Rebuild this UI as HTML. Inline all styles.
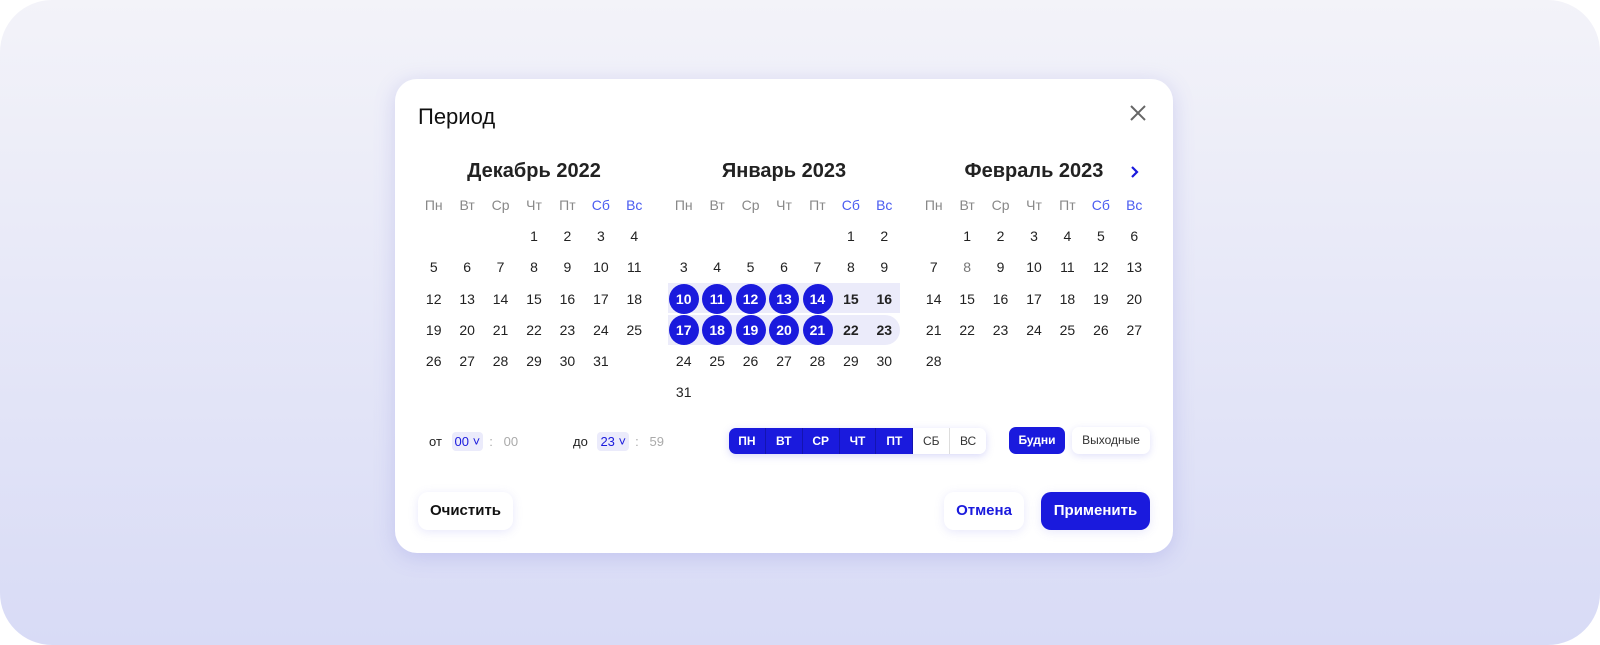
<!DOCTYPE html>
<html><head><meta charset="utf-8"><style>
*{margin:0;padding:0;box-sizing:border-box}
body{width:1600px;height:645px;background:#fff;font-family:"Liberation Sans","DejaVu Sans",sans-serif;position:relative;overflow:hidden}
.bg{position:absolute;left:0;top:0;width:1600px;height:645px;border-radius:52px;background:linear-gradient(#f3f3f9,#d8dbf6)}
.card{position:absolute;left:395px;top:79px;width:778px;height:474px;background:#fff;border-radius:22px;box-shadow:0 4px 20px rgba(120,120,220,.25)}
.t{position:absolute;left:418px;top:104px;font-size:22px;color:#111}
.x{position:absolute;left:1128px;top:103px}
.mt{position:absolute;top:160px;width:234px;text-align:center;font-size:20px;font-weight:bold;color:#222}
.grid{position:absolute;top:190px;width:234px;display:grid;grid-template-columns:repeat(7,1fr);grid-auto-rows:31.2px;font-size:14px;color:#222;text-align:center}
.grid span{line-height:31px;position:relative;z-index:2}
.grid .h{color:#888;line-height:30px}
.grid .w{color:#4a5cf0}
.grid .s span,.grid span.s{}
.sel{color:#fff;font-weight:bold}
.sel::before{content:"";position:absolute;left:2px;top:0;width:30px;height:30px;border-radius:15px;background:#1a1add;z-index:-1}
.b{font-weight:bold}
.band{position:absolute;left:668px;width:232px;height:30px;background:#ebebfa;z-index:1}
.tm{position:absolute;top:432px;font-size:13px;color:#222}
.sp{display:inline-block;background:#ebebfb;color:#1a1add;border-radius:4px;padding:2px 3px;margin:0 6px}
.gr{color:#aaa}
.seg{position:absolute;left:729px;top:428px;width:257px;height:26px;border-radius:7px;background:#fff;box-shadow:0 2px 8px rgba(100,100,230,.25);display:flex;overflow:hidden;font-size:12px;font-weight:bold}
.seg div{flex:1;text-align:center;line-height:26px;color:#fff;background:#1a1add;border-right:1px solid #1414b0}
.seg div.o{background:#fff;color:#333;font-weight:normal;border-right:1px solid #ddd}
.pill{position:absolute;top:427px;height:27px;line-height:27px;border-radius:7px;font-size:12px;text-align:center}
.btn{position:absolute;top:492px;height:38px;line-height:38px;border-radius:10px;font-size:15px;font-weight:bold;text-align:center;box-shadow:0 2px 10px rgba(100,100,230,.15)}
</style></head><body>
<div class="bg"></div>
<div class="card"></div>
<div class="t">Период</div>
<svg class="x" width="20" height="20" viewBox="0 0 20 20"><path d="M3 3L17 17M17 3L3 17" stroke="#666" stroke-width="2"/></svg>
<div class="mt" style="left:417px">Декабрь 2022</div>
<div class="mt" style="left:667px">Январь 2023</div>
<div class="mt" style="left:917px">Февраль 2023</div>
<svg style="position:absolute;left:1129px;top:165px" width="12" height="14" viewBox="0 0 12 14"><path d="M3 2L8 7L3 12" fill="none" stroke="#1a1add" stroke-width="2.2"/></svg>
<div class="band" style="top:283px"></div>
<div class="band" style="top:315px;border-radius:0 15px 15px 0"></div>
<div class="grid" style="left:417px">
<span class="h">Пн</span><span class="h">Вт</span><span class="h">Ср</span><span class="h">Чт</span><span class="h">Пт</span><span class="h w">Сб</span><span class="h w">Вс</span>
<span></span><span></span><span></span><span>1</span><span>2</span><span>3</span><span>4</span>
<span>5</span><span>6</span><span>7</span><span>8</span><span>9</span><span>10</span><span>11</span>
<span>12</span><span>13</span><span>14</span><span>15</span><span>16</span><span>17</span><span>18</span>
<span>19</span><span>20</span><span>21</span><span>22</span><span>23</span><span>24</span><span>25</span>
<span>26</span><span>27</span><span>28</span><span>29</span><span>30</span><span>31</span><span></span>
</div>
<div class="grid" style="left:667px">
<span class="h">Пн</span><span class="h">Вт</span><span class="h">Ср</span><span class="h">Чт</span><span class="h">Пт</span><span class="h w">Сб</span><span class="h w">Вс</span>
<span></span><span></span><span></span><span></span><span></span><span>1</span><span>2</span>
<span>3</span><span>4</span><span>5</span><span>6</span><span>7</span><span>8</span><span>9</span>
<span class="sel">10</span><span class="sel">11</span><span class="sel">12</span><span class="sel">13</span><span class="sel">14</span><span class="b">15</span><span class="b">16</span>
<span class="sel">17</span><span class="sel">18</span><span class="sel">19</span><span class="sel">20</span><span class="sel">21</span><span class="b">22</span><span class="b">23</span>
<span>24</span><span>25</span><span>26</span><span>27</span><span>28</span><span>29</span><span>30</span>
<span>31</span>
</div>
<div class="grid" style="left:917px">
<span class="h">Пн</span><span class="h">Вт</span><span class="h">Ср</span><span class="h">Чт</span><span class="h">Пт</span><span class="h w">Сб</span><span class="h w">Вс</span>
<span></span><span>1</span><span>2</span><span>3</span><span>4</span><span>5</span><span>6</span>
<span>7</span><span style="color:#777">8</span><span>9</span><span>10</span><span>11</span><span>12</span><span>13</span>
<span>14</span><span>15</span><span>16</span><span>17</span><span>18</span><span>19</span><span>20</span>
<span>21</span><span>22</span><span>23</span><span>24</span><span>25</span><span>26</span><span>27</span>
<span>28</span>
</div>
<div class="tm" style="left:429px">от <span class="sp">00 ˅</span><span class="gr">:&nbsp;&nbsp; 00</span></div>
<div class="tm" style="left:573px">до <span class="sp">23 ˅</span><span class="gr">:&nbsp;&nbsp; 59</span></div>
<div class="seg"><div>ПН</div><div>ВТ</div><div>СР</div><div>ЧТ</div><div>ПТ</div><div class="o">СБ</div><div class="o" style="border:0">ВС</div></div>
<div class="pill" style="left:1009px;width:56px;background:#1a1add;color:#fff;font-weight:bold">Будни</div>
<div class="pill" style="left:1072px;width:78px;background:#fff;color:#333;box-shadow:0 2px 8px rgba(100,100,230,.2)">Выходные</div>
<div class="btn" style="left:418px;width:95px;background:#fff;color:#111">Очистить</div>
<div class="btn" style="left:944px;width:80px;background:#fff;color:#1a1add">Отмена</div>
<div class="btn" style="left:1041px;width:109px;background:#1a1add;color:#fff">Применить</div>
</body></html>
